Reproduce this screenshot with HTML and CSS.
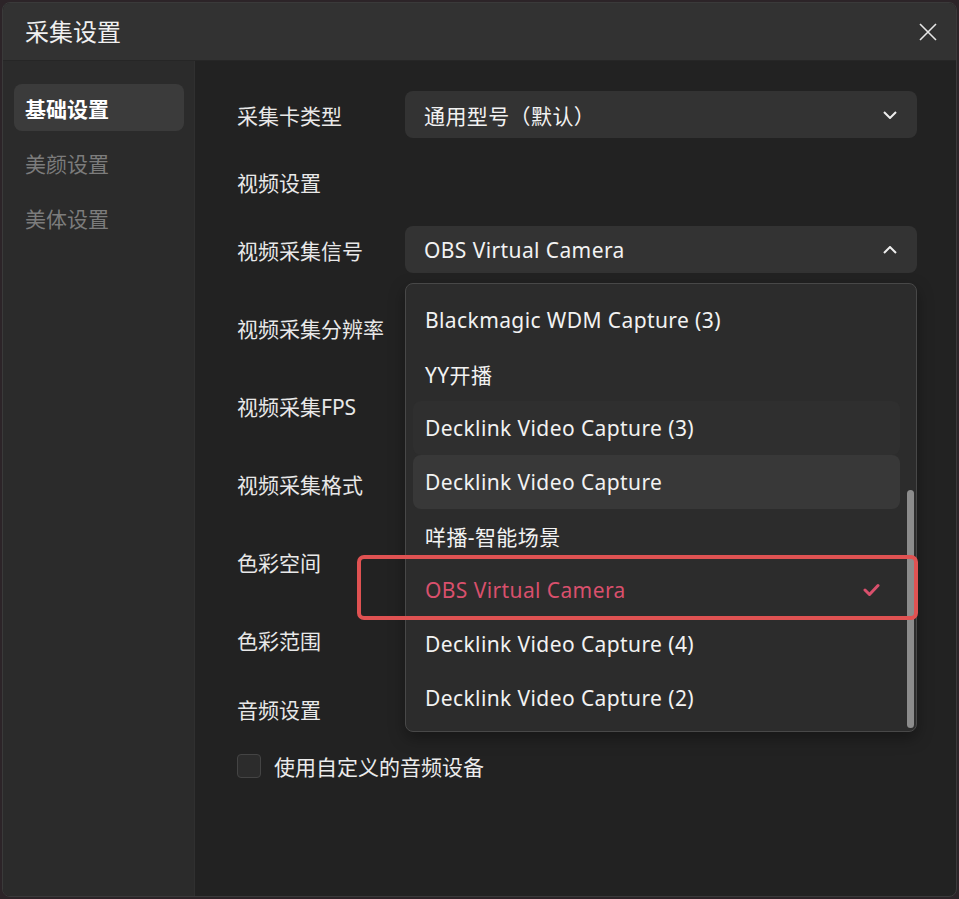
FILE: index.html
```html
<!DOCTYPE html>
<html lang="zh-CN">
<head>
    <meta charset="UTF-8">
    <meta name="viewport" content="width=device-width, initial-scale=1.0">
    <title>采集设置</title>
    <link rel="stylesheet" href="styles.css">
</head>
<body>
    <div class="dialog">
        <div class="dialog-header">
            <div class="dialog-title">采集设置</div>
            <svg class="close-btn" width="18" height="18" viewBox="0 0 18 18">
                <path d="M1 1L17 17M17 1L1 17" stroke="#e6e6e6" stroke-width="1.6" fill="none"/>
            </svg>
        </div>
        <div class="dialog-body">
            <div class="sidebar">
                <div class="nav-item active">基础设置</div>
                <div class="nav-item">美颜设置</div>
                <div class="nav-item">美体设置</div>
            </div>
            <div class="content">
                <div class="row">
                    <div class="label">采集卡类型</div>
                    <div class="select">
                        <span>通用型号（默认）</span>
                        <svg class="chevron" width="14" height="8" viewBox="0 0 14 8">
                            <path d="M1 1L7 7L13 1" stroke="#eee" stroke-width="2" fill="none"/>
                        </svg>
                    </div>
                </div>
                <div class="row section">
                    <div class="label">视频设置</div>
                </div>
                <div class="row">
                    <div class="label">视频采集信号</div>
                    <div class="select open">
                        <span>OBS Virtual Camera</span>
                        <svg class="chevron" width="14" height="8" viewBox="0 0 14 8">
                            <path d="M1 7L7 1L13 7" stroke="#eee" stroke-width="2" fill="none"/>
                        </svg>
                        <div class="dropdown">
                            <div class="option">Blackmagic WDM Capture (3)</div>
                            <div class="option">YY开播</div>
                            <div class="option faint">Decklink Video Capture (3)</div>
                            <div class="option hover">Decklink Video Capture</div>
                            <div class="option">咩播-智能场景</div>
                            <div class="option selected">
                                <span>OBS Virtual Camera</span>
                                <svg width="17" height="14" viewBox="0 0 17 14">
                                    <path d="M2 7L6.5 11.5L15 2.5" stroke="#d9506c" stroke-width="3" fill="none" stroke-linecap="round" stroke-linejoin="round"/>
                                </svg>
                            </div>
                            <div class="option">Decklink Video Capture (4)</div>
                            <div class="option">Decklink Video Capture (2)</div>
                            <div class="scrollbar"></div>
                            <div class="mark"></div>
                        </div>
                    </div>
                </div>
                <div class="row">
                    <div class="label">视频采集分辨率</div>
                </div>
                <div class="row">
                    <div class="label">视频采集FPS</div>
                </div>
                <div class="row">
                    <div class="label">视频采集格式</div>
                </div>
                <div class="row">
                    <div class="label">色彩空间</div>
                </div>
                <div class="row">
                    <div class="label">色彩范围</div>
                </div>
                <div class="row section audio">
                    <div class="label">音频设置</div>
                </div>
                <div class="row section">
                    <label class="checkbox">
                        <span class="box"></span>
                        <span>使用自定义的音频设备</span>
                    </label>
                </div>
            </div>
        </div>
    </div>
</body>
</html>
```

FILE: styles.css
```css
* {
    margin: 0;
    padding: 0;
    box-sizing: border-box;
}

body {
    background: #2c2428;
    font-family: "Noto Sans", "Noto Sans CJK SC", sans-serif;
    color: #ececec;
    height: 899px;
    overflow: hidden;
}

.dialog {
    margin: 2px;
    width: 955px;
    height: 895px;
    background: #222;
    border-radius: 8px;
    overflow: hidden;
    display: flex;
    flex-direction: column;
    border: 1px solid #3a3a3a;
}

.dialog-header {
    height: 58px;
    background: #323232;
    display: flex;
    align-items: center;
    justify-content: space-between;
    padding: 0 19px 0 22px;
    border-bottom: 1px solid #262626;
}

.dialog-title {
    font-size: 24px;
    line-height: 30px;
    color: #f0f0f0;
}

.dialog-body {
    flex: 1;
    display: flex;
}

.sidebar {
    width: 192px;
    background: #2b2b2b;
    border-right: 1px solid #303030;
    padding: 23px 10px 0 11px;
    display: flex;
    flex-direction: column;
    gap: 8px;
}

.nav-item {
    height: 47px;
    border-radius: 8px;
    padding-left: 11px;
    display: flex;
    align-items: center;
    font-size: 21px;
    color: #7c7c7c;
}

.nav-item.active {
    background: #3b3b3b;
    color: #fff;
    font-weight: bold;
}

.content {
    flex: 1;
    padding: 30px 39px 0 42px;
    display: flex;
    flex-direction: column;
    gap: 31px;
}

.row {
    height: 47px;
    display: flex;
    align-items: center;
}

.row.section {
    height: 26px;
}

.row.audio {
    margin-top: 2px;
}

.label {
    width: 168px;
    font-size: 21px;
    color: #e8e8e8;
    white-space: nowrap;
}

.select {
    flex: 1;
    height: 47px;
    background: #333;
    border-radius: 8px;
    padding: 0 20px 0 19px;
    display: flex;
    align-items: center;
    justify-content: space-between;
    font-size: 21px;
    letter-spacing: 0.4px;
    color: #f2f2f2;
    position: relative;
}

.dropdown {
    position: absolute;
    top: calc(100% + 10px);
    left: 0;
    right: 0;
    height: 449px;
    background: #2c2c2c;
    border: 1px solid #484848;
    border-radius: 8px;
    padding: 9px 16px 6px 7px;
    box-shadow: 0 6px 16px rgba(0, 0, 0, 0.35);
    z-index: 2;
}

.option {
    height: 54px;
    border-radius: 8px;
    padding: 0 20px 0 12px;
    display: flex;
    align-items: center;
    justify-content: space-between;
    font-size: 21px;
    letter-spacing: 0.4px;
    color: #f2f2f2;
}

.option.faint {
    background: #2f2f2f;
}

.option.hover {
    background: #383838;
}

.option.selected {
    color: #d9506c;
}

.scrollbar {
    position: absolute;
    right: 2px;
    top: 206px;
    width: 7px;
    height: 238px;
    border-radius: 4px;
    background: #8c8c8c;
}

/* red outline around the current signal */
.mark {
    position: absolute;
    left: -49px;
    right: -2px;
    top: 271px;
    height: 65px;
    border: 4px solid #e05252;
    border-radius: 7px;
}

.checkbox {
    display: flex;
    align-items: center;
    gap: 13px;
    font-size: 21px;
    color: #ececec;
}

.box {
    width: 24px;
    height: 24px;
    border: 1px solid #444;
    background: #2c2c2c;
    border-radius: 4px;
}
```
